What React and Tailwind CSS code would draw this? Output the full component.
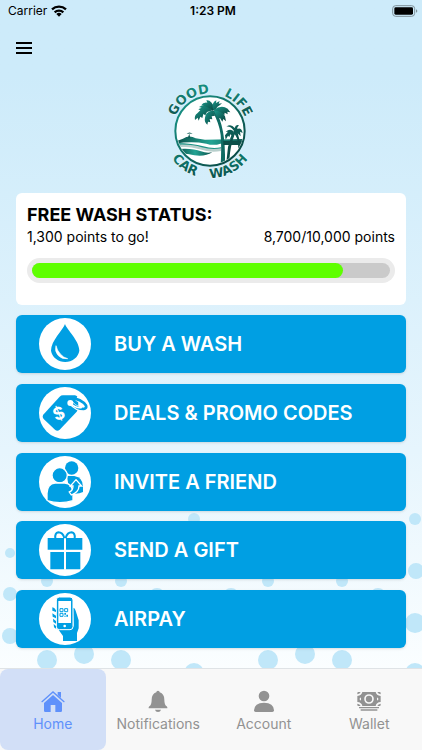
import { useState } from "react";

const BUBBLES = [
  [10, 135, 5], [10, 94, 7], [10, 52, 8], [47, 107, 6], [121, 107, 6], [268, 107, 6], [342, 107, 6],
  [47, 28, 10], [84, 34, 10], [121, 28, 10], [268, 28, 10], [305, 34, 10], [342, 28, 10],
  [194, 169, 6], [415, 169, 6], [416, 117, 8], [415, 65, 10], [157, 92, 8], [231, 92, 8], [378, 92, 8],
  [194, 15, 10], [415, 15, 10],
];

function Bubbles() {
  return (
    <svg
      className="absolute bottom-[62px] left-0 w-full h-[188px]"
      viewBox="0 0 422 188"
      preserveAspectRatio="xMidYMax slice"
      fill="#c0e7f9"
      aria-hidden="true"
    >
      {BUBBLES.map(([x, up, r]) => (
        <circle key={`${x}-${up}`} cx={x} cy={188 - up} r={r} />
      ))}
    </svg>
  );
}

function WifiIcon() {
  return (
    <svg className="w-4 h-3" viewBox="0 0 48 36" fill="none" stroke="#000" strokeWidth="7" aria-hidden="true">
      <path d="M3 13 A31 31 0 0 1 45 13" />
      <path d="M11 22 A19 19 0 0 1 37 22" />
      <path d="M24 35 L16 27 Q24 20 32 27 Z" fill="#000" stroke="none" />
    </svg>
  );
}

function BatteryIcon() {
  return (
    <svg className="w-[26px] h-3" viewBox="0 0 78 36" aria-hidden="true">
      <rect x="2" y="2" width="66" height="32" rx="9" fill="none" stroke="#7f9199" strokeWidth="3" />
      <rect x="7" y="7" width="56" height="22" rx="4" />
      <path d="M72 13 Q76 15 76 18 Q76 21 72 23 Z" fill="#7f9199" />
    </svg>
  );
}

function Logo() {
  return (
    <svg className="w-[110px] h-[110px]" viewBox="3 0 330 330" role="img" aria-label="Good Life Car Wash">
      <defs>
        <linearGradient id="teal" x1="0" y1="0" x2="1" y2="1">
          <stop offset="0" stopColor="#1b9a8c" />
          <stop offset="1" stopColor="#073f3b" />
        </linearGradient>
        <linearGradient id="sea" x1="0" y1="0" x2="1" y2="0">
          <stop offset="0" stopColor="#0b4f49" />
          <stop offset="0.5" stopColor="#23a393" />
          <stop offset="1" stopColor="#0b4f49" />
        </linearGradient>
        <linearGradient id="letters" gradientUnits="userSpaceOnUse" x1="0" y1="40" x2="0" y2="310">
          <stop offset="0" stopColor="#158c80" />
          <stop offset="0.25" stopColor="#0f5d56" />
          <stop offset="0.8" stopColor="#0f766c" />
          <stop offset="1" stopColor="#0a4f4a" />
        </linearGradient>
        <path id="arcTop" d="M52 168 A113 113 0 0 1 278 168" />
        <path id="arcBottom" d="M24 168 A141 141 0 0 0 306 168" />
        <clipPath id="disc">
          <circle cx="165" cy="168" r="100" />
        </clipPath>
      </defs>
      <circle cx="165" cy="168" r="104" fill="#fff" stroke="url(#teal)" strokeWidth="6" />
      <g clipPath="url(#disc)">
        <path d="M60 200 L84 191 Q103 178 122 190 L150 194 L276 192 L276 204 L196 206 Q176 213 154 206 Q110 198 60 206 Z" fill="url(#sea)" />
        <path d="M60 204 Q112 204 145 214 Q172 222 198 217 L198 224 Q165 230 130 219 Q98 210 60 216 Z" fill="#1d9385" />
        <path d="M66 209 Q112 207 140 217 Q170 225 198 220 L198 228 Q165 234 134 223 Q105 213 66 216 Z" fill="#b8cfcc" />
        <path d="M68 222 Q112 218 138 229 Q155 236 172 232 Q150 246 118 241 Q95 235 74 236 Z" fill="url(#sea)" />
        <path d="M98 190 L103 176 L106 190 Z M95 177 Q103 168 113 177 Q104 174 95 177 Z" fill="#0f5d56" />
        <path d="M172 108 Q193 145 197 180 Q200 220 197 270 L210 270 Q211 205 204 170 Q197 132 181 106 Z" fill="#0f6b63" />
        <path d="M232 172 Q226 195 219 216 L214 262 L223 256 Q225 215 240 174 Z M240 172 Q249 192 250 220 L256 216 Q254 190 247 170 Z" fill="#0b4f49" />
        <path d="M205 198 H272 V210 H205 Z" fill="#0b4f49" />
      </g>
      <g fill="url(#teal)">
        <path d="M174 106 Q153 84 132 96 L140 98 L130 103 L136 106 L127 115 Q117 121 120 135 L128 128 L131 137 L136 125 L142 129 L145 117 L151 121 L156 111 Z" />
        <path d="M173 106 Q151 112 150 128 Q147 141 157 149 L159 140 L166 142 L164 132 L172 133 L170 124 L180 122 Z" />
        <path d="M174 107 Q155 94 139 91 Q144 81 157 83 L154 76 Q169 73 180 102 Z" />
        <path d="M174 104 Q168 84 184 76 L183 84 L194 78 L191 86 L201 85 L194 91 Q185 94 182 105 Z" />
        <path d="M176 106 Q198 88 218 101 L226 112 L217 110 L218 118 L209 113 L208 121 L198 114 L195 121 Z" />
        <path d="M177 107 Q202 107 210 124 L213 139 L205 132 L202 140 L195 129 L189 131 L182 119 Z" />
      </g>
      <g fill="#0d5c55">
        <path d="M237 170 Q225 158 212 171 L219 170 L210 181 L212 194 L219 182 L223 186 L226 178 L230 181 Z" />
        <path d="M237 168 Q227 153 214 155 Q228 145 239 159 Q242 147 252 151 Q245 157 247 162 Q259 157 263 174 L255 170 L257 184 L247 174 L246 189 L239 177 L232 192 L225 191 Z" />
      </g>
      <g
        fill="url(#letters)"
        className="font-['DejaVu_Sans',sans-serif] text-[39px] font-bold"
        stroke="#eefafc"
        strokeWidth="3"
        paintOrder="stroke"
        textAnchor="middle"
      >
        <text>
          <textPath href="#arcTop" startOffset="31%">GOOD</textPath>
        </text>
        <text>
          <textPath href="#arcTop" startOffset="75%">LIFE</textPath>
        </text>
        <text>
          <textPath href="#arcBottom" startOffset="30%">CAR</textPath>
        </text>
        <text>
          <textPath href="#arcBottom" startOffset="65%">WASH</textPath>
        </text>
      </g>
    </svg>
  );
}

// Menu icons share a 156 unit box, three units to a pixel
function DropIcon() {
  return (
    <>
      <path d="M78 18 C84 36 121 68 121 98 A43 40 0 0 1 36 98 C36 68 72 36 78 18 Z" />
      <path d="M51 83 Q46 99 57 112 Q69 125 86 122 Q73 119 64 108 Q54 97 51 83 Z" fill="#fff" stroke="#fff" strokeWidth="2" strokeLinejoin="round" />
    </>
  );
}

function TagIcon() {
  return (
    <>
      <path d="M14 82 L62 29 Q66 25 72 25 L108 25 Q114 26 117 32 L118 60 Q118 68 113 74 L62 128 Q55 134 48 128 L14 96 Q8 89 14 82 Z" />
      <path d="M96 48 Q113 67 134 66 Q148 62 135 49 Q124 40 112 35" fill="none" stroke="#fff" strokeWidth="13" />
      <path d="M96 46 Q113 66 134 66 Q149 62 135 48 Q124 38 106 34" fill="none" stroke="#009fe3" strokeWidth="8" />
      <circle cx="94" cy="48" r="9" fill="#fff" />
      <path d="M94 48 Q108 63 126 62 Q130 58 124 53" fill="none" stroke="#fff" strokeWidth="5" strokeLinecap="round" />
      <text
        x="60"
        y="98"
        transform="rotate(-22 60 81)"
        textAnchor="middle"
        fill="#fff"
        className="font-['Inter',sans-serif] text-[52px] font-bold"
      >
        $
      </text>
    </>
  );
}

function InviteIcon() {
  return (
    <>
      <circle cx="98" cy="36" r="20" />
      <path d="M84 60 H106 Q132 64 132 92 V108 Q118 116 92 112 Z" />
      <g stroke="#fff" strokeWidth="4">
        <circle cx="62" cy="58" r="23" />
        <path d="M24 112 Q25 83 48 81 H77 Q101 83 102 112 V134 Q63 146 24 134 Z" />
        <path d="M111 71 L128 90 H120 Q120 108 97 117 L91 108 Q102 104 102 90 H94 Z" />
      </g>
    </>
  );
}

function GiftIcon() {
  return (
    <>
      <path d="M26 42 H130 V77 H26 Z M34 84 H124 V136 H34 Z" />
      <path d="M76 42 Q71 25 58 25 Q47 27 49 43 M80 42 Q85 25 98 25 Q109 27 107 43" fill="none" stroke="#009fe3" strokeWidth="6" />
      <path d="M78 43 V137" stroke="#fff" strokeWidth="6" />
    </>
  );
}

function PhoneIcon() {
  return (
    <>
      <path d="M102 44 Q108 44 110 53 L119 82 V106 L114 120 V144 H72 V129 L55 105 H98 Q104 104 104 97 Z" />
      <rect x="52" y="12" width="50" height="98" rx="9" stroke="#fff" strokeWidth="3" />
      <path d="M58 24 H96 V90 H58 Z" fill="#fff" />
      <circle cx="77" cy="99" r="4" fill="#fff" />
      <path d="M63 47 h9 v9 h-9 Z M77 47 h9 v9 h-9 Z M63 61 h9 v9 h-9 Z" fill="none" stroke="#009fe3" strokeWidth="3" />
      <path d="M76 60 h5 v5 h-5 Z M82 65 h5 v6 h-5 Z M76 68 h4 v3 h-4 Z" />
      <path d="M40 43 Q46 43 51 52 V57 L40 53 Z M40 61 L51 68 V76 L41 71 Z M42 77 L51 84 V92 L43 87 Z M44 93 L51 99 V107 L45 103 Z" />
    </>
  );
}

const MENU = [
  { label: "BUY A WASH", Icon: DropIcon },
  { label: "DEALS & PROMO CODES", Icon: TagIcon },
  { label: "INVITE A FRIEND", Icon: InviteIcon },
  { label: "SEND A GIFT", Icon: GiftIcon },
  { label: "AIRPAY", Icon: PhoneIcon },
];

function HomeIcon() {
  return (
    <>
      <path d="M3 35 L36 6 L69 35" fill="none" stroke="currentColor" strokeWidth="4" strokeLinecap="round" />
      <path d="M50 6 H60 V24 L50 15 Z" />
      <path d="M36 15 L63 39 V62 Q63 66 59 66 H43 V45 H29 V66 H13 Q9 66 9 62 V39 Z" />
    </>
  );
}

function BellIcon() {
  return (
    <>
      <path d="M36 2 Q41 2 41 7 Q55 12 55 29 Q55 44 62 49 Q65 52 64 55 H8 Q7 52 10 49 Q17 44 17 29 Q17 12 31 7 Q31 2 36 2 Z" />
      <path d="M27 59 H45 Q43 66 36 66 Q29 66 27 59 Z" />
    </>
  );
}

function PersonIcon() {
  return (
    <>
      <circle cx="36" cy="18" r="16" />
      <path d="M6 61 Q7 38 36 38 Q65 38 66 61 Q66 66 61 66 H11 Q6 66 6 61 Z" />
    </>
  );
}

function CashIcon() {
  return (
    <>
      <path d="M16 6 H56 Q58 17 71 18 V36 Q58 37 56 48 H16 Q14 37 1 36 V18 Q14 17 16 6 Z" />
      <path d="M1 13 V9 Q1 6 4 6 H11 Q9 12 1 13 Z M71 13 V9 Q71 6 68 6 H61 Q63 12 71 13 Z M1 41 V45 Q1 48 4 48 H11 Q9 42 1 41 Z M71 41 V45 Q71 48 68 48 H61 Q63 42 71 41 Z" />
      <circle cx="36" cy="27" r="12" fill="none" stroke="#f8f8f8" strokeWidth="5" />
      <path d="M12 22 L7 27 L12 32 Z M60 22 L65 27 L60 32 Z" fill="#f8f8f8" />
      <path d="M6 51 H66 V55 H6 Z M11 58 H61 V62 H11 Z" />
    </>
  );
}

const TABS = [
  { label: "Home", Icon: HomeIcon },
  { label: "Notifications", Icon: BellIcon },
  { label: "Account", Icon: PersonIcon },
  { label: "Wallet", Icon: CashIcon },
];

function StatusCard({ points, goal }) {
  return (
    <section className="bg-white rounded-md mx-4 h-28 px-[11px] pt-3 text-black">
      <h1 className="text-lg leading-5 font-bold">FREE WASH STATUS:</h1>
      <div className="flex justify-between text-sm leading-6">
        <span>{(goal - points).toLocaleString("en-US")} points to go!</span>
        <span>
          {points.toLocaleString("en-US")}/{goal.toLocaleString("en-US")} points
        </span>
      </div>
      <div
        role="progressbar"
        aria-label="Free wash status"
        aria-valuenow={points}
        aria-valuemin={0}
        aria-valuemax={goal}
        className="mt-[9px] rounded-full bg-[#ebebeb] p-[5px]"
      >
        <div className="h-[15px] rounded-full bg-[#cacaca]">
          <div className="h-full rounded-full bg-[#5eff00]" style={{ width: `${(points / goal) * 100}%` }} />
        </div>
      </div>
    </section>
  );
}

export default function App() {
  const [tab, setTab] = useState("Home");

  return (
    <div className="relative flex flex-col min-h-screen bg-linear-to-b from-[#cdebfa] from-10% via-[#e6f5fd] via-60% to-[#fbfeff] to-90% font-['Inter',sans-serif]">
      <Bubbles />

      {/* Status bar */}
      <div className="relative grid grid-cols-3 items-center h-[22px] pl-2 pr-1 text-xs text-black">
        <div className="flex items-center gap-1">
          Carrier
          <WifiIcon />
        </div>
        <div className="text-center font-semibold">1:23 PM</div>
        <div className="flex justify-end">
          <BatteryIcon />
        </div>
      </div>

      <header className="relative flex px-4 pt-5">
        <button type="button" aria-label="Open menu" className="flex flex-col gap-[3px] w-4 h-[13px]">
          <span className="h-[2px] w-full bg-black" />
          <span className="h-[2px] w-full bg-black" />
          <span className="h-[2px] w-full bg-black" />
        </button>
      </header>

      <main className="relative flex-1 flex flex-col pt-5 pb-5">
        <div className="flex justify-center mb-2">
          <Logo />
        </div>

        <StatusCard points={8700} goal={10000} />

        <div className="flex-1 flex flex-col justify-between gap-2 px-4 pt-[10px]">
          {MENU.map(({ label, Icon }) => (
            <button
              key={label}
              type="button"
              className="flex items-center gap-[23px] h-[58px] pl-[23px] rounded-md bg-[#009fe3] text-white text-xl font-semibold shadow-sm"
            >
              <svg className="w-[52px] h-[52px] rounded-full bg-white" viewBox="0 0 156 156" fill="#009fe3" aria-hidden="true">
                <Icon />
              </svg>
              {label}
            </button>
          ))}
        </div>
      </main>

      <nav className="relative grid grid-cols-4 h-[82px] bg-[#f8f8f8] border-t border-[#dfe3e6]">
        {TABS.map(({ label, Icon }) => (
          <button
            key={label}
            type="button"
            onClick={() => setTab(label)}
            className={
              tab === label
                ? "flex flex-col items-center pt-[21px] text-sm rounded-lg bg-[#d2dff7] text-[#5f91fb]"
                : "flex flex-col items-center pt-[21px] text-sm rounded-lg text-[#929292]"
            }
          >
            <svg className="w-6 h-6" viewBox="0 0 72 72" fill="currentColor" aria-hidden="true">
              <Icon />
            </svg>
            {label}
          </button>
        ))}
      </nav>
    </div>
  );
}
